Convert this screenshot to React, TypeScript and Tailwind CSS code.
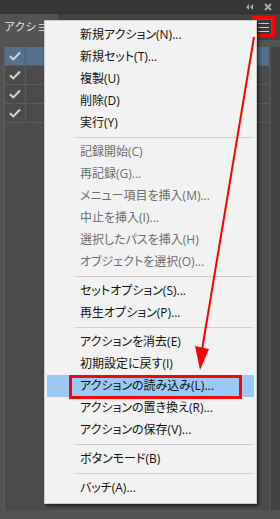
import React from 'react';

type MenuEntry = { label: string; disabled?: boolean; active?: boolean } | 'sep';

const menuItems: MenuEntry[] = [
  { label: '新規アクション(N)...' },
  { label: '新規セット(T)...' },
  { label: '複製(U)' },
  { label: '削除(D)' },
  { label: '実行(Y)' },
  'sep',
  { label: '記録開始(C)', disabled: true },
  { label: '再記録(G)...', disabled: true },
  { label: 'メニュー項目を挿入(M)...', disabled: true },
  { label: '中止を挿入(I)...', disabled: true },
  { label: '選択したパスを挿入(H)', disabled: true },
  { label: 'オブジェクトを選択(O)...', disabled: true },
  'sep',
  { label: 'セットオプション(S)...' },
  { label: '再生オプション(P)...' },
  'sep',
  { label: 'アクションを消去(E)' },
  { label: '初期設定に戻す(I)' },
  { label: 'アクションの読み込み(L)...', active: true },
  { label: 'アクションの置き換え(R)...' },
  { label: 'アクションの保存(V)...' },
  'sep',
  { label: 'ボタンモード(B)' },
  'sep',
  { label: 'バッチ(A)...' },
];

const Check = () => (
  <svg width="12" height="10" viewBox="0 0 12 10" fill="none">
    <path d="M1 5.2 L4.3 8.4 L11 1.5" stroke="#d6d6d6" strokeWidth="2" />
  </svg>
);

const ListRow = ({ selected }: { selected?: boolean }) => (
  <div className={`flex h-[19px] border-b border-[#5c5c5c] ${selected ? 'bg-[#55708f]' : 'bg-[#4b4b4b]'}`}>
    <div className="w-[21px] flex items-center justify-center border-r border-[#5c5c5c]">
      <Check />
    </div>
    <div className="flex-1" />
  </div>
);

const App: React.FC = () => {
  return (
    <div
      className="relative w-[280px] h-[519px] overflow-hidden bg-[#535353]"
      style={{ fontFamily: '"Open Sans", "Noto Sans CJK JP", sans-serif' }}
    >
      {/* title strip */}
      <div className="h-[13px] bg-[#363636] flex items-center justify-end gap-[11px] pr-[8px]">
        <svg width="7" height="6" viewBox="0 0 7 6">
          <path d="M3 0 L0 3 L3 6 Z M7 0 L4 3 L7 6 Z" fill="#a9a9a9" />
        </svg>
        <svg width="8" height="8" viewBox="0 0 8 8">
          <path d="M1 1 L7 7 M7 1 L1 7" stroke="#a9a9a9" strokeWidth="2" />
        </svg>
      </div>

      {/* tab row */}
      <div className="h-[27px] bg-[#434343] flex items-stretch border-t border-[#2e2e2e]">
        <div className="w-[58px] bg-[#535353] flex items-center pl-[4px] text-[11px] text-[#e4e4e4] whitespace-nowrap overflow-hidden">
          アクション
        </div>
        <div className="flex-1 flex items-center justify-end pr-[8px]">
          <div className="w-[18px] h-[17px] bg-[#3a3a3a] border border-[#5a5a5a] flex flex-col items-center justify-center gap-[3px]">
            <div className="w-[11px] h-[1px] bg-[#d0d0d0]" />
            <div className="w-[11px] h-[1px] bg-[#d0d0d0]" />
            <div className="w-[11px] h-[1px] bg-[#d0d0d0]" />
          </div>
        </div>
      </div>

      {/* action list */}
      <div className="flex h-[470px] pt-[7px]">
        <div className="ml-[4px] flex-1 border-l border-[#606060] bg-[#4b4b4b]">
          <ListRow selected />
          <ListRow />
          <ListRow />
          <ListRow />
        </div>
        <div className="w-[9px] ml-[2px] bg-[#424242]" />
      </div>

      {/* red box around menu button */}
      <div className="absolute left-[252px] top-[16px] w-[23px] h-[21px] border-[3px] border-[#ff0000]" />

      {/* context menu */}
      <div
        className="absolute left-[44px] top-[20px] w-[213px] bg-[#f2f2f2] border border-[#cccccc] px-[2px] pt-[3px] pb-[4px] shadow-[2px_2px_3px_rgba(0,0,0,0.55)] text-[12px] [font-feature-settings:'palt']"
      >
        {menuItems.map((item, i) =>
          item === 'sep' ? (
            <div key={i} className="h-[7px] flex items-center pl-[28px] pr-[1px]">
              <div className="h-[1px] w-full bg-[#cfcfcf]" />
            </div>
          ) : (
            <div
              key={i}
              className={`relative h-[22px] flex items-center pl-[33px] whitespace-nowrap ${
                item.disabled ? 'text-[#6d6d6d]' : 'text-[#111111]'
              } ${item.active ? 'bg-[#99c9f4]' : ''}`}
            >
              {item.label}
              {item.active && (
                <div className="absolute left-[22px] top-0 w-[173px] h-[24px] border-[3px] border-[#ff0000]" />
              )}
            </div>
          )
        )}
      </div>

      {/* red arrow */}
      <svg className="absolute left-0 top-0" width="280" height="519" viewBox="0 0 280 519">
        <line x1="254" y1="37" x2="202" y2="350" stroke="#ff0000" strokeWidth="2" />
        <polygon points="195,346 209,349 200,370" fill="#ff0000" />
      </svg>
    </div>
  );
};

export default App;
